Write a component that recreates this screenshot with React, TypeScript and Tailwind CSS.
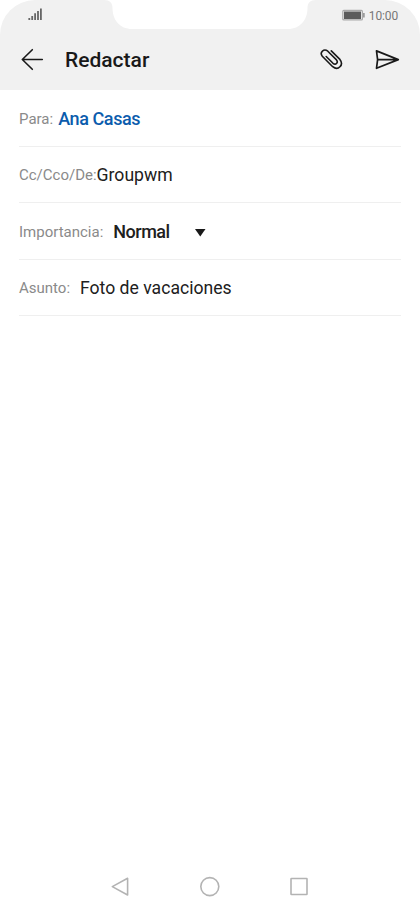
import type { ReactNode } from 'react'

function StatusBar() {
  return (
    <div className="relative flex h-[30px] items-start justify-between pl-[28px] pr-[22px]">
      <svg className="absolute left-[104px] top-0" width="212" height="30" viewBox="0 0 212 30" fill="#fff">
        <path d="M0 0C6 0 8.500 3 8.500 8C8.500 20 16 29 28 29H184C196 29 203.500 20 203.500 8C203.500 3 206 0 212 0Z" />
      </svg>
      <svg className="mt-[8px]" width="15" height="13" viewBox="0 0 15 13" stroke="#666" strokeWidth="1.800">
        <path d="M1.300 10V12M4.200 8V12M7.100 5.200V12M10 3V12M12.900 0.500V12" />
      </svg>
      <div className="mt-[7px] flex items-center text-[#777]">
        <svg width="23" height="12" viewBox="0 0 23 12">
          <rect x="0.800" y="1.400" width="19.600" height="9.500" rx="1" fill="#eee" stroke="#aaa" strokeWidth="1.200" />
          <rect x="2" y="2.500" width="17" height="7.500" fill="#5c5c5c" />
          <path d="M21.900 4V8.500" stroke="#888" strokeWidth="1.400" />
        </svg>
        <span className="ml-[4px] origin-right scale-y-[1.14] text-[12px] leading-[16px] tracking-[-0.15px]">10:00</span>
      </div>
    </div>
  )
}

function Header() {
  return (
    <header className="flex h-[60px] items-center px-5">
      <svg width="24" height="24" viewBox="0 0 24 24" fill="none" stroke="#191919" strokeWidth="1.600" strokeLinecap="round" strokeLinejoin="round">
        <path d="M12.300 1.700L2.300 11.500L12.300 21.300M2.300 11.500H22.300" />
      </svg>
      <h1 className="ml-[21px] pt-[2px] text-[21px] font-medium text-[#191919]">Redactar</h1>
      <svg className="ml-auto" width="24" height="24" viewBox="0 0 24 24" fill="none" stroke="#191919" strokeWidth="1.600" strokeLinecap="round" strokeLinejoin="round">
        <path d="M12.300 2.900L20.900 11.400C25.200 17 19.100 23.100 13.700 18.700L3.300 8.300C.2 4.200 5 .1 8.800 3.200L17.500 11.900C19.600 14.700 16.700 17.500 14 15.300L7.200 8.500" />
      </svg>
      <svg className="ml-8" width="25" height="24" viewBox="0 0 25 24" fill="none" stroke="#191919" strokeWidth="1.700" strokeLinejoin="round">
        <path d="M1.500 2.900L23.300 11.600L1.500 20.300L2.600 11.600ZM2.600 11.600H23.300" />
      </svg>
    </header>
  )
}

function Field({ label, children }: { label: string; children: ReactNode }) {
  return (
    <div className="flex h-[56.500px] items-center border-b border-[#efefef] pt-[2px] text-[17.6px] text-[#202020]">
      <span className="text-[15px] text-[#8a8a8a]">{label}</span>
      {children}
    </div>
  )
}

function NavBar() {
  return (
    <nav className="mt-auto flex h-[46px] items-center justify-between px-[109px] text-[#b3b3b3]">
      <svg width="22" height="22" viewBox="0 0 22 22" fill="none" stroke="currentColor" strokeWidth="1.600" strokeLinejoin="round">
        <path d="M18.600 2.300V19L3.300 10.600Z" />
      </svg>
      <svg width="22" height="22" viewBox="0 0 22 22" fill="none" stroke="currentColor" strokeWidth="1.600">
        <circle cx="10.800" cy="10.600" r="9" />
      </svg>
      <svg width="22" height="22" viewBox="0 0 22 22" fill="none" stroke="currentColor" strokeWidth="1.600">
        <rect x="2" y="2.500" width="16" height="16" rx="0.500" />
      </svg>
    </nav>
  )
}

export default function App() {
  return (
    <div className="flex h-[910px] w-[420px] flex-col overflow-hidden bg-white font-['Roboto',sans-serif]">
      <div className="rounded-t-[35px] bg-[#f1f1f1]">
        <StatusBar />
        <Header />
      </div>
      <main className="px-[19px]">
        <Field label="Para:">
          <span className="ml-[5px] text-[18px] font-medium tracking-[-0.4px] text-[#0b5cad]">Ana Casas</span>
        </Field>
        <Field label="Cc/Cco/De:">
          <span>Groupwm</span>
        </Field>
        <Field label="Importancia:">
          <span className="ml-[10px] text-[18px] font-medium tracking-[-0.5px]">Normal</span>
          <svg className="ml-[25px] mt-[2px]" width="11" height="8" viewBox="0 0 11 8" fill="#191919">
            <path d="M0 0H10.500L5.250 7.500Z" />
          </svg>
        </Field>
        <Field label="Asunto:">
          <span className="ml-[10px]">Foto de vacaciones</span>
        </Field>
      </main>
      <NavBar />
    </div>
  )
}
